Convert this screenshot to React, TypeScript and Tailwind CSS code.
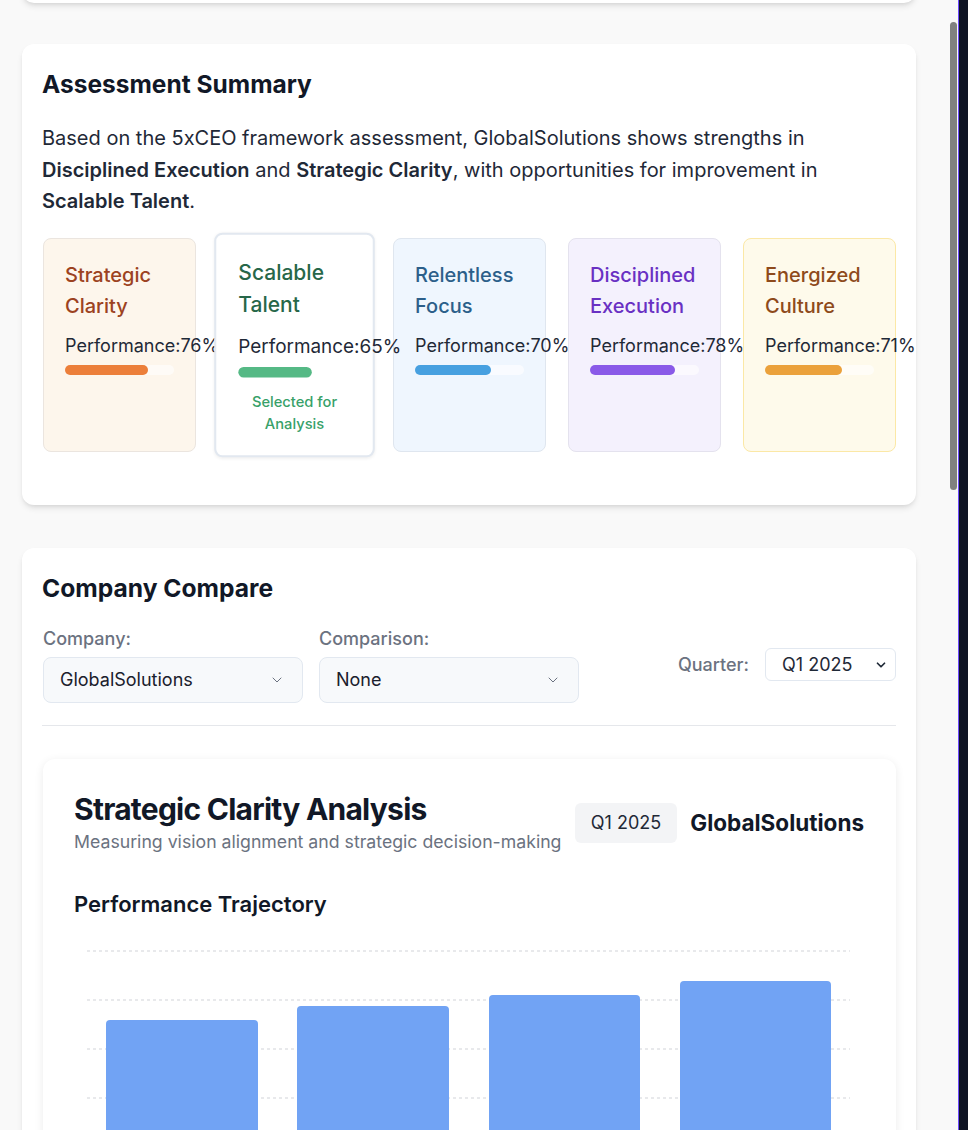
import { ChevronDown } from 'lucide-react';

interface Pillar {
  name: string;
  score: number;
  bg: string;
  border: string;
  title: string;
  bar: string;
  selected?: boolean;
}

const pillars: Pillar[] = [
  { name: 'Strategic Clarity', score: 76, bg: 'bg-[#fdf6ec]', border: 'border-[#ebe5df]', title: 'text-[#9c4221]', bar: 'bg-[#ec7f3a]' },
  { name: 'Scalable Talent', score: 65, bg: 'bg-white', border: 'border-[#e2e8f0]', title: 'text-[#276749]', bar: 'bg-[#55b985]', selected: true },
  { name: 'Relentless Focus', score: 70, bg: 'bg-[#eff6fe]', border: 'border-[#dfe6ef]', title: 'text-[#2c5f8a]', bar: 'bg-[#47a0e0]' },
  { name: 'Disciplined Execution', score: 78, bg: 'bg-[#f4f1fd]', border: 'border-[#e4e2ee]', title: 'text-[#6930c3]', bar: 'bg-[#8a5ae8]' },
  { name: 'Energized Culture', score: 71, bg: 'bg-[#fefaeb]', border: 'border-[#fbe8a6]', title: 'text-[#8e4a1b]', bar: 'bg-[#eba13b]' },
];

const bars = [
  { x: 31, w: 152, top: 90 },
  { x: 222, w: 152, top: 76 },
  { x: 414, w: 151, top: 65 },
  { x: 605, w: 151, top: 51 },
];

const PillarCard = ({ p }: { p: Pillar }) => (
  <div
    className={`h-[214px] rounded-lg p-[21px] ${p.bg} ${
      p.selected ? 'border-2 scale-105 shadow-[0_1px_3px_rgba(0,0,0,0.06)]' : 'border'
    } ${p.border}`}
  >
    <h3 className={`text-xl font-medium leading-[31px] ${p.title}`}>{p.name}</h3>
    <p className="mt-[10px] text-lg leading-[27px] whitespace-nowrap text-[#1f2937]">
      Performance:{p.score}%
    </p>
    <div className="mt-[6px] h-[10px] w-full rounded-full bg-white/60">
      <div className={`h-full rounded-full ${p.bar}`} style={{ width: `${p.score}%` }} />
    </div>
    {p.selected && (
      <p className="mt-3 text-center text-sm leading-[21px] font-medium text-[#38a169]">
        Selected for Analysis
      </p>
    )}
  </div>
);

const Field = ({ label, value }: { label: string; value: string }) => (
  <div className="w-[260px]">
    <label className="block text-lg leading-6 font-medium text-[#6b7280]">{label}</label>
    <div className="relative mt-1.5">
      <select
        defaultValue={value}
        className="h-[46px] w-full appearance-none rounded-lg border border-[#e2e8f0] bg-[#f7f9fb] pl-4 text-lg text-[#1a202c] outline-none"
      >
        <option>{value}</option>
      </select>
      <ChevronDown size={16} strokeWidth={1.5} className="pointer-events-none absolute right-[18px] top-[15px] text-[#6b7280]" />
    </div>
  </div>
);

export default function App() {
  return (
    <div className="relative flex h-[1130px] w-full overflow-hidden font-['Inter',sans-serif]">
      <main className="flex-1 bg-[#f9f9f9] pl-[22px] pr-[42px]">
        {/* tail of the previous card */}
        <div className="-mt-[37px] h-[40px] rounded-xl bg-white shadow-md" />

        <section className="mt-[41px] rounded-xl bg-white px-5 pt-6 pb-[53px] shadow-md">
          <h2 className="text-[24.5px] leading-8 font-bold text-[#111827]">Assessment Summary</h2>
          <p className="mt-[23px] text-xl leading-[31.5px] text-[#1f2937]">
            Based on the 5xCEO framework assessment, GlobalSolutions shows strengths in{' '}
            <span className="font-semibold">Disciplined Execution</span> and{' '}
            <span className="font-semibold">Strategic Clarity</span>, with opportunities for improvement in{' '}
            <span className="font-semibold">Scalable Talent</span>.
          </p>
          <div className="mt-5 grid grid-cols-5 gap-[22px] pl-px">
            {pillars.map((p) => (
              <PillarCard key={p.name} p={p} />
            ))}
          </div>
        </section>

        <section className="mt-[43px] rounded-xl bg-white px-5 pt-6 pb-10 shadow-md">
          <h2 className="text-[24.6px] leading-8 font-bold text-[#111827]">Company Compare</h2>
          <div className="mt-[23px] flex items-center justify-between pl-px">
            <div className="flex gap-4">
              <Field label="Company:" value="GlobalSolutions" />
              <Field label="Comparison:" value="None" />
            </div>
            <div className="flex items-center gap-4">
              <span className="text-lg font-medium text-[#6b7280]">Quarter:</span>
              <div className="relative">
                <select
                  defaultValue="Q1 2025"
                  className="h-[33px] w-[131px] appearance-none rounded-md border border-[#e2e8f0] bg-white pl-4 text-lg text-[#1f2937] outline-none"
                >
                  <option>Q1 2025</option>
                </select>
                <ChevronDown size={14} strokeWidth={3} className="pointer-events-none absolute right-[8px] top-[10px] text-[#1f2937]" />
              </div>
            </div>
          </div>
          <div className="mt-[22px] border-t border-[#e5e7eb]" />

          <div className="mt-[33px] ml-px rounded-xl bg-white p-8 shadow-[0_2px_10px_rgba(0,0,0,0.08)]">
            <div className="flex items-center justify-between">
              <div className="-ml-px">
                <h3 className="text-[30px] leading-9 font-bold tracking-tight text-[#111827]">
                  Strategic Clarity Analysis
                </h3>
                <p className="mt-0.5 text-[17.7px] leading-[26px] text-[#6b7280]">
                  Measuring vision alignment and strategic decision-making
                </p>
              </div>
              <div className="flex items-center gap-[13px]">
                <span className="rounded-md bg-[#f3f4f6] px-4 py-[6px] text-lg text-[#1f2937]">Q1 2025</span>
                <span className="text-[22.5px] font-bold text-[#111827]">GlobalSolutions</span>
              </div>
            </div>

            <h4 className="mt-[34px] -ml-px text-[22px] leading-[30px] font-semibold text-[#111827]">Performance Trajectory</h4>
            <svg width="789" height="320" viewBox="0 0 789 320" className="mt-[11px] block">
              {[21, 70, 119, 168, 217, 266].map((y) => (
                <line key={y} x1="12" x2="775" y1={y} y2={y} stroke="#d1d3d8" strokeDasharray="3 3" />
              ))}
              {bars.map((b) => (
                <path
                  key={b.x}
                  d={`M${b.x} 320 V${b.top + 4} Q${b.x} ${b.top} ${b.x + 4} ${b.top} H${b.x + b.w - 4} Q${b.x + b.w} ${b.top} ${b.x + b.w} ${b.top + 4} V320 Z`}
                  fill="#71a3f4"
                />
              ))}
            </svg>
          </div>
        </section>
      </main>
      <div className="w-[10px] border-l border-[#6d4aff] bg-[#0f1424]" />
      <div className="absolute left-[950px] top-[22px] h-[468px] w-[7px] rounded-full bg-[#808080]" />
    </div>
  );
}
